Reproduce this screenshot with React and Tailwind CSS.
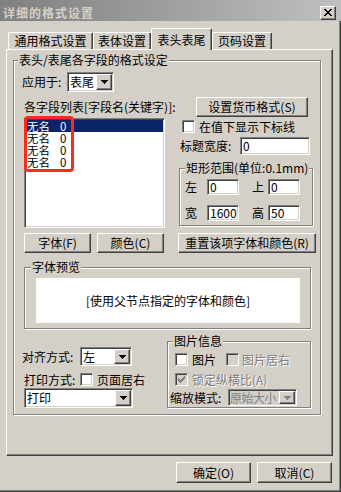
import React from 'react';

const raised =
  'border border-t-white border-l-white border-r-[#404040] border-b-[#404040] shadow-[inset_-1px_-1px_0_#808080]';
const sunken =
  'border border-t-[#808080] border-l-[#808080] border-r-white border-b-white shadow-[inset_1px_1px_0_#404040,inset_-1px_-1px_0_#d4d0c8]';
const etched = 'border border-[#808080] shadow-[inset_1px_1px_0_#fff,1px_1px_0_#fff]';
const grayText = 'text-[#808080] [text-shadow:1px_1px_0_#fff]';

function Arrow({ disabled }) {
  return (
    <svg width="7" height="4" viewBox="0 0 7 4" shapeRendering="crispEdges">
      <path d="M0 0h7v1H0zM1 1h5v1H1zM2 2h3v1H2zM3 3h1v1H3z" fill={disabled ? '#808080' : '#000'} />
    </svg>
  );
}

function Combo({ className, value, disabled }) {
  return (
    <div className={`flex p-[1px] ${sunken} ${disabled ? 'bg-[#d4d0c8]' : 'bg-white'} ${className}`}>
      <div
        className={`flex-1 min-w-0 flex items-center whitespace-nowrap ${
          disabled ? 'text-[#808080] tracking-[-0.5px] pl-0' : 'pl-[1px]'
        }`}
      >
        {value}
      </div>
      <div className={`w-[16px] shrink-0 flex items-center justify-center bg-[#d4d0c8] ${raised}`}>
        <Arrow disabled={disabled} />
      </div>
    </div>
  );
}

function Check({ checked, disabled }) {
  return (
    <span
      className={`inline-flex shrink-0 items-center justify-center w-[13px] h-[13px] ${sunken} ${
        disabled ? 'bg-[#d4d0c8]' : 'bg-white'
      }`}
    >
      {checked && (
        <svg width="7" height="7" viewBox="0 0 7 7" shapeRendering="crispEdges">
          <path
            d="M6 0h1v3H6zM5 1h1v3H5zM4 2h1v3H4zM3 3h1v3H3zM2 4h1v3H2zM1 3h1v3H1zM0 2h1v3H0z"
            fill={disabled ? '#808080' : '#000'}
          />
        </svg>
      )}
    </span>
  );
}

function Field({ className, children }) {
  return (
    <div className={`flex items-center bg-white pl-[2px] ${sunken} ${className}`}>{children}</div>
  );
}

function Btn({ className, children }) {
  return (
    <div className={`flex items-center justify-center bg-[#d4d0c8] whitespace-nowrap ${raised} ${className}`}>
      {children}
    </div>
  );
}

function Group({ label, labelLeft, className, children }) {
  return (
    <div className={`relative ${etched} ${className}`}>
      <span className={`absolute -top-[7px] ${labelLeft} px-[1px] bg-[#d4d0c8] leading-[12px] whitespace-nowrap`}>
        {label}
      </span>
      {children}
    </div>
  );
}

function Tab({ label, active, className }) {
  return (
    <div
      className={`flex items-center justify-center rounded-t-[2px] border-t border-l border-white border-r border-r-[#404040] shadow-[inset_-1px_0_0_#808080] bg-[#d4d0c8] ${
        active ? 'relative z-10 h-[22px] -mb-[1px]' : 'h-[17px]'
      } ${className}`}
    >
      {label}
    </div>
  );
}

const rows = ['无名', '无名', '无名', '无名'];

export default function App() {
  return (
    <div className="w-[341px] h-[492px] bg-[#d4d0c8] text-black text-[12px] leading-[12px] font-['Noto_Sans_CJK_SC',sans-serif] shadow-[inset_-1px_-1px_0_#404040,inset_-2px_-2px_0_#808080] overflow-hidden">
      {/* title bar */}
      <div className="h-[21px] pt-[4px] pl-[3px] pr-[5px] flex items-center justify-between bg-gradient-to-r from-[#808080] to-[#c0c0c0]">
        <span className="font-bold tracking-[1px] text-[#d4d0c8]">详细的格式设置</span>
        <div className={`w-[16px] h-[14px] flex items-center justify-center bg-[#d4d0c8] ${raised}`}>
          <svg width="8" height="7" viewBox="0 0 8 7" shapeRendering="crispEdges">
            <path
              d="M0 0h2v1H0zM6 0h2v1H6zM1 1h2v1H1zM5 1h2v1H5zM2 2h4v1H2zM3 3h2v1H3zM2 4h4v1H2zM1 5h2v1H1zM5 5h2v1H5zM0 6h2v1H0zM6 6h2v1H6z"
              fill="#000"
            />
          </svg>
        </div>
      </div>

      {/* tabs */}
      <div className="mt-[7px] h-[21px] pl-[8px] flex items-end">
        <Tab label="通用格式设置" className="w-[85px]" />
        <Tab label="表体设置" className="w-[58px]" />
        <Tab label="表头表尾" active className="w-[61px]" />
        <Tab label="页码设置" className="w-[60px]" />
      </div>

      {/* tab panel */}
      <div className="ml-[6px] w-[327px] h-[407px] pl-[6px] pt-[10px] border-l border-t border-white border-r border-b border-r-[#404040] border-b-[#404040] shadow-[inset_-1px_-1px_0_#808080]">
        <Group label="表头/表尾各字段的格式设定" labelLeft="left-[4px]" className="w-[308px] h-[355px] pl-[8px] pt-[11px]">
          {/* top section */}
          <div className="flex">
            <div className="w-[143px] flex flex-col">
              <div className="flex items-center h-[20px]">
                <span className="w-[45px]">应用于:</span>
                <Combo className="w-[47px] h-[20px]" value="表尾" />
              </div>
              <div className="mt-[9px] ml-[2px] h-[12px] whitespace-nowrap">各字段列表[字段名(关键字)]:</div>
              <div className={`relative mt-[5px] ml-[2px] w-[141px] h-[110px] bg-white p-[1px] ${sunken}`}>
                {rows.map((name, i) => (
                  <div
                    key={i}
                    className={`h-[12px] flex items-center pl-[1px] text-[11.5px] ${
                      i === 0 ? 'bg-[#0a246a] text-white' : ''
                    }`}
                  >
                    <span className="w-[33px]">{name}</span>
                    <span>0</span>
                  </div>
                ))}
                <div className="absolute -left-[1px] -top-[3px] w-[50px] h-[56px] border-[3px] border-[#ff2a1f] rounded-[4px]" />
              </div>
            </div>

            <div className="ml-[12px] w-[139px] flex flex-col">
              <Btn className="mt-[25px] ml-[19px] w-[112px] h-[20px]">设置货币格式(S)</Btn>
              <div className="mt-[3px] ml-[5px] h-[13px] flex items-center">
                <Check />
                <span className="ml-[4px] whitespace-nowrap">在值下显示下标线</span>
              </div>
              <div className="mt-[4px] ml-[3px] h-[18px] flex items-center">
                <span className="w-[60px]">标题宽度:</span>
                <Field className="w-[70px] h-[18px]">0</Field>
              </div>
              <Group
                label="矩形范围(单位:0.1mm)"
                labelLeft="left-[5px]"
                className="mt-[13px] ml-[2px] w-[134px] h-[58px] pl-[5px] pt-[10px]"
              >
                <div className="flex items-center h-[16px]">
                  <span className="w-[22px]">左</span>
                  <Field className="w-[32px] h-[16px]">0</Field>
                  <span className="ml-[13px] w-[16px]">上</span>
                  <Field className="w-[32px] h-[16px]">0</Field>
                </div>
                <div className="mt-[10px] flex items-center h-[16px]">
                  <span className="w-[22px]">宽</span>
                  <Field className="w-[32px] h-[16px]">1600</Field>
                  <span className="ml-[13px] w-[16px]">高</span>
                  <Field className="w-[32px] h-[16px]">50</Field>
                </div>
              </Group>
            </div>
          </div>

          {/* buttons row */}
          <div className="mt-[5px] flex">
            <Btn className="ml-[2px] w-[67px] h-[20px]">字体(F)</Btn>
            <Btn className="ml-[6px] w-[67px] h-[20px]">颜色(C)</Btn>
            <Btn className="ml-[14px] w-[138px] h-[20px]">重置该项字体和颜色(R)</Btn>
          </div>

          {/* font preview */}
          <Group label="字体预览" labelLeft="left-[6px]" className="mt-[14px] ml-[2px] w-[287px] h-[62px] pl-[11px] pt-[10px]">
            <div className="w-[264px] h-[45px] bg-white flex items-center justify-center">[使用父节点指定的字体和颜色]</div>
          </Group>

          {/* bottom section */}
          <div className="mt-[12px] flex items-start">
            <div className="w-[145px] pt-[6px] flex flex-col">
              <div className="flex items-center h-[19px]">
                <span className="w-[58px]">对齐方式:</span>
                <Combo className="w-[52px] h-[19px]" value="左" />
              </div>
              <div className="mt-[7px] ml-[2px] h-[13px] flex items-center">
                <span className="w-[56px]">打印方式:</span>
                <Check />
                <span className="ml-[4px]">页面居右</span>
              </div>
              <Combo className="mt-[2px] ml-[2px] w-[109px] h-[20px]" value="打印" />
            </div>

            <Group label="图片信息" labelLeft="left-[5px]" className="w-[144px] h-[67px] pl-[2px] pt-[11px]">
              <div className="ml-[5px] h-[13px] flex items-center">
                <Check />
                <span className="ml-[4px] w-[24px]">图片</span>
                <span className="ml-[10px] flex">
                  <Check disabled />
                </span>
                <span className={`ml-[3px] whitespace-nowrap ${grayText}`}>图片居右</span>
              </div>
              <div className="mt-[7px] ml-[5px] h-[13px] flex items-center">
                <Check checked disabled />
                <span className={`ml-[4px] whitespace-nowrap ${grayText}`}>锁定纵横比(A)</span>
              </div>
              <div className="mt-[3px] h-[17px] flex items-center">
                <span className="w-[58px]">缩放模式:</span>
                <Combo className="w-[69px] h-[17px]" value="原始大小" disabled />
              </div>
            </Group>
          </div>
        </Group>
      </div>

      {/* dialog buttons */}
      <div className="mt-[6px] pr-[9px] flex justify-end gap-[6px]">
        <Btn className="w-[75px] h-[21px]">确定(O)</Btn>
        <Btn className="w-[75px] h-[21px]">取消(C)</Btn>
      </div>
    </div>
  );
}
